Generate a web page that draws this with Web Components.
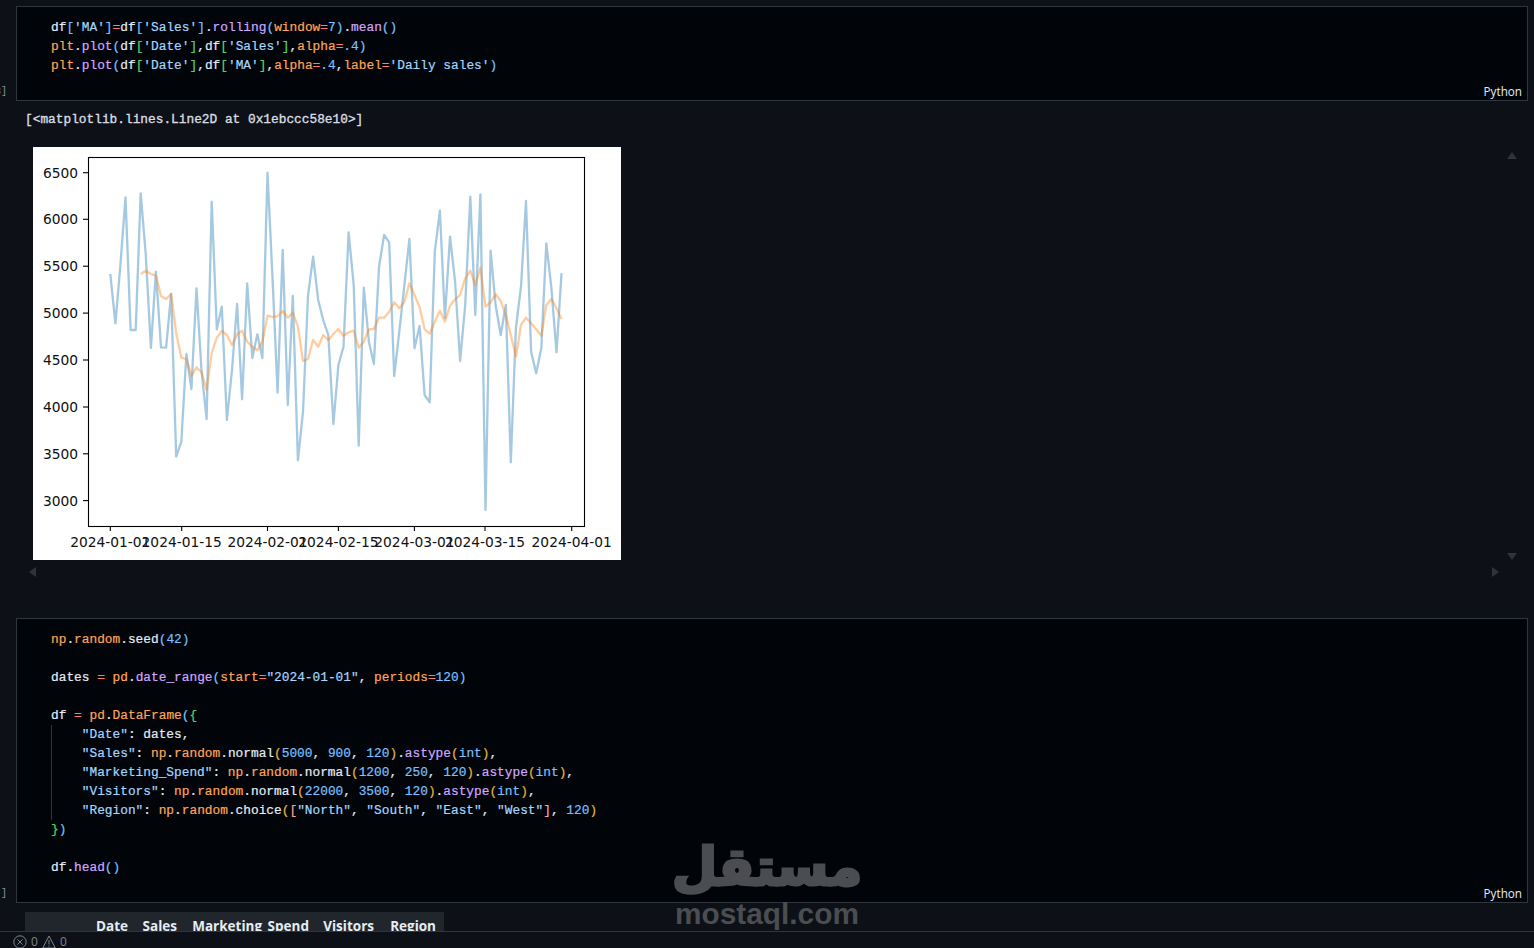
<!DOCTYPE html>
<html>
<head>
<meta charset="utf-8">
<title>Notebook</title>
<style>
  html, body { margin: 0; height: 100%; background: #0d1117; overflow: hidden; }
  /* tokens of the code passed into code-cell */
  pre { margin: 0; font: inherit; }
  .v { color: #e6edf3; }
  .f { color: #d2a8ff; }
  .m { color: #ffa657; }
  .s { color: #a5d6ff; }
  .n { color: #79c0ff; }
  .o { color: #ff7b72; }
  .b1 { color: #79c0ff; }
  .b2 { color: #56d364; }
  .b3 { color: #e3b341; }
  .b4 { color: #ffa198; }
  .guide { display: block; box-shadow: inset 1px 0 #30363d; }
</style>
</head>
<body>
<notebook-view>
  <code-cell count="3]">
<pre><span class="v">df</span><span class="b1">[</span><span class="s">'MA'</span><span class="b1">]</span><span class="o">=</span><span class="v">df</span><span class="b1">[</span><span class="s">'Sales'</span><span class="b1">]</span><span class="v">.</span><span class="f">rolling</span><span class="b1">(</span><span class="m">window</span><span class="o">=</span><span class="n">7</span><span class="b1">)</span><span class="v">.</span><span class="f">mean</span><span class="b1">()</span>
<span class="m">plt</span><span class="v">.</span><span class="f">plot</span><span class="b1">(</span><span class="v">df</span><span class="b2">[</span><span class="s">'Date'</span><span class="b2">]</span><span class="v">,df</span><span class="b2">[</span><span class="s">'Sales'</span><span class="b2">]</span><span class="v">,</span><span class="m">alpha</span><span class="o">=</span><span class="n">.4</span><span class="b1">)</span>
<span class="m">plt</span><span class="v">.</span><span class="f">plot</span><span class="b1">(</span><span class="v">df</span><span class="b2">[</span><span class="s">'Date'</span><span class="b2">]</span><span class="v">,df</span><span class="b2">[</span><span class="s">'MA'</span><span class="b2">]</span><span class="v">,</span><span class="m">alpha</span><span class="o">=</span><span class="n">.4</span><span class="v">,</span><span class="m">label</span><span class="o">=</span><span class="s">'Daily sales'</span><span class="b1">)</span></pre>
  </code-cell>
  <cell-output>
    <div slot="text">[&lt;matplotlib.lines.Line2D at 0x1ebccc58e10&gt;]</div>
    <sales-chart></sales-chart>
  </cell-output>
  <code-cell count="]">
<pre><span class="m">np</span><span class="v">.</span><span class="m">random</span><span class="v">.seed</span><span class="b1">(</span><span class="n">42</span><span class="b1">)</span>

<span class="v">dates </span><span class="o">=</span> <span class="m">pd</span><span class="v">.</span><span class="f">date_range</span><span class="b1">(</span><span class="m">start</span><span class="o">=</span><span class="s">"2024-01-01"</span><span class="v">, </span><span class="m">periods</span><span class="o">=</span><span class="n">120</span><span class="b1">)</span>

<span class="v">df </span><span class="o">=</span> <span class="m">pd</span><span class="v">.</span><span class="m">DataFrame</span><span class="b1">(</span><span class="b2">{</span>
<span class="guide"><span class="s">    "Date"</span><span class="v">: dates,</span>
<span class="s">    "Sales"</span><span class="v">: </span><span class="m">np</span><span class="v">.</span><span class="m">random</span><span class="v">.normal</span><span class="b3">(</span><span class="n">5000</span><span class="v">, </span><span class="n">900</span><span class="v">, </span><span class="n">120</span><span class="b3">)</span><span class="v">.</span><span class="f">astype</span><span class="b3">(</span><span class="n">int</span><span class="b3">)</span><span class="v">,</span>
<span class="s">    "Marketing_Spend"</span><span class="v">: </span><span class="m">np</span><span class="v">.</span><span class="m">random</span><span class="v">.normal</span><span class="b3">(</span><span class="n">1200</span><span class="v">, </span><span class="n">250</span><span class="v">, </span><span class="n">120</span><span class="b3">)</span><span class="v">.</span><span class="f">astype</span><span class="b3">(</span><span class="n">int</span><span class="b3">)</span><span class="v">,</span>
<span class="s">    "Visitors"</span><span class="v">: </span><span class="m">np</span><span class="v">.</span><span class="m">random</span><span class="v">.normal</span><span class="b3">(</span><span class="n">22000</span><span class="v">, </span><span class="n">3500</span><span class="v">, </span><span class="n">120</span><span class="b3">)</span><span class="v">.</span><span class="f">astype</span><span class="b3">(</span><span class="n">int</span><span class="b3">)</span><span class="v">,</span>
<span class="s">    "Region"</span><span class="v">: </span><span class="m">np</span><span class="v">.</span><span class="m">random</span><span class="v">.choice</span><span class="b3">(</span><span class="b4">[</span><span class="s">"North"</span><span class="v">, </span><span class="s">"South"</span><span class="v">, </span><span class="s">"East"</span><span class="v">, </span><span class="s">"West"</span><span class="b4">]</span><span class="v">, </span><span class="n">120</span><span class="b3">)</span></span><span class="b2">}</span><span class="b1">)</span>

<span class="v">df.</span><span class="f">head</span><span class="b1">()</span></pre>
  </code-cell>
  <frame-table columns="Date,Sales,Marketing_Spend,Visitors,Region"></frame-table>
</notebook-view>
<status-bar></status-bar>
<mostaql-mark></mostaql-mark>

<script>
// Notebook column, clipped above the status bar
class NotebookView extends HTMLElement {
  constructor() {
    super();
    this.attachShadow({ mode: 'open' });
    this.shadowRoot.innerHTML = `
      <style>
        :host {
          display: flex;
          flex-direction: column;
          height: 931px;
          overflow: hidden;
          padding-top: 6px;
          box-sizing: border-box;
        }
      </style>
      <slot></slot>
    `;
  }
}

// Code Cell
class CodeCell extends HTMLElement {
  constructor() {
    super();
    this.attachShadow({ mode: 'open' });
  }

  connectedCallback() {
    this.shadowRoot.innerHTML = `
      <style>
        :host {
          display: flex;
          flex: none;
          margin-right: 6px;
        }
        .count {
          width: 16px;
          flex: none;
          display: flex;
          align-items: flex-end;
          justify-content: flex-end;
          box-sizing: border-box;
          padding: 0 9px 4px 0;
          font: 10px "Liberation Mono", monospace;
          color: #8b949e;
          white-space: nowrap;
          overflow: hidden;
        }
        .box {
          flex: 1;
          background: #010409;
          border: 1px solid #30363d;
          padding: 11px 0 0 34px;
          font: 12.82px/19px "Liberation Mono", monospace;
          -webkit-text-stroke: .2px;
          color: #e6edf3;
        }
        .lang {
          display: flex;
          justify-content: flex-end;
          padding: 7px 5px 0 0;
          font: 11.7px/18px "Open Sans", "Liberation Sans", sans-serif;
          -webkit-text-stroke: 0;
          color: #e6edf3;
        }
      </style>
      <div class="count">${this.getAttribute('count')}</div>
      <div class="box">
        <slot></slot>
        <div class="lang">Python</div>
      </div>
    `;
  }
}

// Output of a cell: text, picture and the arrows of its scrollbars
class CellOutput extends HTMLElement {
  constructor() {
    super();
    this.attachShadow({ mode: 'open' });
    this.shadowRoot.innerHTML = `
      <style>
        :host {
          display: block;
          position: relative;
          flex: none;
          height: 518px;
          margin-bottom: -1px;
          box-sizing: border-box;
          padding: 9px 0 0 25px;
          font: 12.82px/19px "Liberation Mono", monospace;
          -webkit-text-stroke: .35px;
          color: #d7dde3;
        }
        .pic { margin: 18px 0 0 8px; -webkit-text-stroke: 0; }
        svg { position: absolute; fill: #30343a; }
      </style>
      <slot name="text"></slot>
      <div class="pic"><slot></slot></div>
      <svg style="left:1507px;top:51px" width="10" height="7"><path d="M5 0l5 7H0z"/></svg>
      <svg style="left:1507px;top:452px" width="10" height="7"><path d="M0 0h10L5 7z"/></svg>
      <svg style="left:29px;top:466px" width="7" height="10"><path d="M7 0v10L0 5z"/></svg>
      <svg style="left:1492px;top:466px" width="7" height="10"><path d="M0 0v10l7-5z"/></svg>
    `;
  }
}

// Matplotlib figure. Values are the page y of each daily point.
const SALES_Y = [274,323.3,265,197.3,330,330,193.3,255,348,271.7,347.3,347.7,294,456.7,441.7,354,389,288.3,372,419,
  201.7,329.3,306.7,420,370,304,399.3,283.3,358,334.3,358,172.7,278,392.7,250,405,296,460.3,411.7,295.7,
  256.7,300,320,335,424,365,346.7,232.3,285,445.7,287.7,341.7,364,266.7,235,242.3,376,331.7,285,239,
  348.3,326,395,402.3,251.7,210.7,318,236.7,281.7,361,305,196.7,315,194.3,510,250.7,305,335,305,462.3,
  328,286.7,201,351.7,373.3,348.3,243.3,288,352.3,273.3];
const MA_Y = [274,270.7,274,275.7,296,299,294,333,357.7,359,375.7,367.3,372.3,390,353,337.7,331,335,345,334.3,
  330.7,341.7,346.7,350.3,341.7,315.7,317,316.3,311,317.7,312.7,326.7,361,359,340,346.7,335,340,
  334,329,335.7,332.3,330.7,347.7,341.7,329.3,329,317.7,317.7,311.7,302.3,308.3,301.7,283.3,295,307.3,329.3,333.7,
  321.7,310.7,321.7,305.7,299.3,295,278.3,270.7,285,267.7,306.7,302.3,294.3,301,315,335,356.7,325,317.7,323.3,329.3,335.7,
  305,299,308.3,319];
const X_AT = i => (110.3 + i * 5.07).toFixed(1);
const Y_TICKS = [[6500,172.7],[6000,219.3],[5500,266.2],[5000,313.1],[4500,360],[4000,407],[3500,453.8],[3000,500.6]];
const X_TICKS = [['2024-01-01',110.3],['2024-01-15',181.7],['2024-02-01',267.5],['2024-02-15',338.4],['2024-03-01',414.4],['2024-03-15',485],['2024-04-01',571.7]];

class SalesChart extends HTMLElement {
  constructor() {
    super();
    this.attachShadow({ mode: 'open' });
  }

  connectedCallback() {
    const blue = SALES_Y.map((y, i) => `${X_AT(i)},${y}`).join(' ');
    const orange = MA_Y.map((y, i) => `${X_AT(i + 6)},${y}`).join(' ');
    const yTicks = Y_TICKS.map(([label, y]) => `
      <line x1="83" x2="88" y1="${y}" y2="${y}"/>
      <text x="78" y="${y + 5}" text-anchor="end">${label}</text>`).join('');
    const xTicks = X_TICKS.map(([label, x]) => `
      <line x1="${x}" x2="${x}" y1="526" y2="531"/>
      <text x="${x}" y="547" text-anchor="middle">${label}</text>`).join('');
    this.shadowRoot.innerHTML = `
      <style>
        :host {
          display: block;
          width: 588px;
          height: 413px;
          background: #fff;
        }
        svg { display: block; }
        line { stroke: #000; stroke-width: 1.1; }
        text { font: 13.8px "DejaVu Sans", sans-serif; fill: #111; }
        polyline { fill: none; stroke-width: 2.3; stroke-linejoin: round; stroke-opacity: .4; }
      </style>
      <svg width="588" height="413" viewBox="33 147 588 413">
        <polyline stroke="#1f77b4" points="${blue}"/>
        <polyline stroke="#ff7f0e" points="${orange}"/>
        <rect x="88.5" y="157.5" width="496" height="369" fill="none" stroke="#000" stroke-width="1.1"/>
        ${yTicks}
        ${xTicks}
      </svg>
    `;
  }
}

// Head of the data frame; only the header row is above the fold
class FrameTable extends HTMLElement {
  constructor() {
    super();
    this.attachShadow({ mode: 'open' });
  }

  connectedCallback() {
    const cols = this.getAttribute('columns').split(',');
    this.shadowRoot.innerHTML = `
      <style>
        :host {
          display: block;
          flex: none;
          margin: 9px 0 0 25px;
          width: 419px;
        }
        .head {
          display: grid;
          grid-template-columns: 103px 49px 132px 65px 62px;
          background: #21262d;
          padding: 4px 8px 0 0;
          font: 700 13.5px/20px "Open Sans", "Liberation Sans", sans-serif;
          color: #e6edf3;
          white-space: nowrap;
          text-align: right;
        }
      </style>
      <div class="head">${cols.map(c => `<span>${c}</span>`).join('')}</div>
    `;
  }
}

// Status Bar
class StatusBar extends HTMLElement {
  constructor() {
    super();
    this.attachShadow({ mode: 'open' });
    this.shadowRoot.innerHTML = `
      <style>
        :host {
          display: flex;
          align-items: center;
          height: 17px;
          box-sizing: border-box;
          border-top: 1px solid #30363d;
          background: #0d1117;
          padding: 3px 0 0 13px;
          font: 12px/14px "Open Sans", "Liberation Sans", sans-serif;
          color: #7d8590;
        }
        svg { flex: none; fill: none; stroke: currentColor; stroke-width: 1; }
        span { margin: 0 4px; }
      </style>
      <svg width="14" height="14" viewBox="0 0 14 14"><circle cx="7" cy="7" r="6.2"/><path d="M4.4 4.4l5.2 5.2M9.6 4.4l-5.2 5.2"/></svg>
      <span>0</span>
      <svg width="14" height="14" viewBox="0 0 14 14"><path d="M7 1l6.3 12H.7z"/><path d="M7 5v4.5M7 10.5v1.3"/></svg>
      <span>0</span>
    `;
  }
}

// Watermark over the whole page
class MostaqlMark extends HTMLElement {
  constructor() {
    super();
    this.attachShadow({ mode: 'open' });
    this.shadowRoot.innerHTML = `
      <style>
        :host {
          position: absolute;
          left: 667px;
          top: 831px;
          width: 200px;
          display: flex;
          flex-direction: column;
          align-items: center;
          color: #4b4d51;
          pointer-events: none;
        }
        .ar {
          font: 700 52px/72px "DejaVu Sans", sans-serif;
          -webkit-text-stroke: 3px #4b4d51;
          stroke-linejoin: round;
          direction: rtl;
          white-space: nowrap;
        }
        .en {
          font: 700 29.8px/30px "Liberation Sans", sans-serif;
          margin-top: -4px;
        }
      </style>
      <div class="ar">مستقل</div>
      <div class="en">mostaql.com</div>
    `;
  }
}

customElements.define('notebook-view', NotebookView);
customElements.define('code-cell', CodeCell);
customElements.define('cell-output', CellOutput);
customElements.define('sales-chart', SalesChart);
customElements.define('frame-table', FrameTable);
customElements.define('status-bar', StatusBar);
customElements.define('mostaql-mark', MostaqlMark);
</script>
</body>
</html>
